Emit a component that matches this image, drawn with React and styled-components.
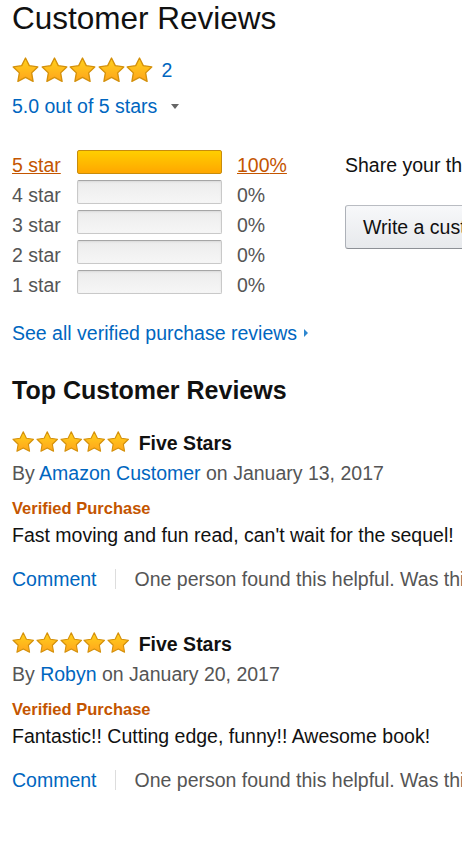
import React from 'react';
import styled, { createGlobalStyle, css } from 'styled-components';

const GlobalStyle = createGlobalStyle`
  html, body {
    margin: 0;
    padding: 0;
    background: #fff;
    overflow-x: hidden;
  }
  body {
    font-family: "Liberation Sans", Arial, sans-serif;
    color: #111;
  }
`;

const Page = styled.div`
  padding: 0 0 40px 12px;
  width: 900px;
`;

const Title = styled.h2`
  margin: 0;
  font-size: 31.5px;
  line-height: 37px;
  font-weight: 400;
  color: #111;
`;

const StarRow = styled.div`
  display: flex;
  align-items: center;
  gap: ${props => props.gap}px;
  margin-top: ${props => props.top || 0}px;
`;

const CountLink = styled.a`
  margin-left: 7px;
  font-size: 19.5px;
  line-height: 24px;
  color: #0066c0;
  text-decoration: none;
`;

const RatingLine = styled.div`
  display: flex;
  align-items: center;
  margin-top: 12px;
  font-size: 19.5px;
  line-height: 24px;
  color: #0066c0;
`;

const Caret = styled.span`
  display: inline-block;
  margin-left: 14px;
  width: 0;
  height: 0;
  border-left: 4px solid transparent;
  border-right: 4px solid transparent;
  border-top: 5px solid #666;
`;

const Summary = styled.div`
  display: flex;
  margin-top: 32px;
`;

const Histogram = styled.div`
  width: 333px;
  flex-shrink: 0;
`;

const HistRow = styled.div`
  display: flex;
  align-items: flex-start;
  height: 24px;
  margin-bottom: 6px;
  font-size: 19.5px;
  line-height: 24px;
  color: ${props => (props.active ? '#c45500' : '#555')};
`;

const HistLabel = styled.span`
  width: 65px;
  padding-top: 3px;
  ${props => props.active && css`text-decoration: underline;`}
`;

const Meter = styled.div`
  width: 145px;
  height: 24px;
  box-sizing: border-box;
  border-radius: 2px;
  ${props =>
    props.filled
      ? css`
          background: linear-gradient(to bottom, #ffce00, #ffa700);
          border: 1px solid #c88c0c;
        `
      : css`
          background: linear-gradient(to bottom, #ececec, #f6f6f6);
          border: 1px solid #c9c9c9;
          border-top-color: #a6a6a6;
          box-shadow: inset 0 1px 2px rgba(0, 0, 0, 0.08);
        `}
`;

const Percent = styled.span`
  margin-left: 15px;
  padding-top: 3px;
  ${props => props.active && css`text-decoration: underline;`}
`;

const ShareCol = styled.div`
  padding-top: 3px;
  white-space: nowrap;
  font-size: 19.5px;
  line-height: 24px;
  color: #111;
`;

const WriteButton = styled.button`
  display: block;
  margin-top: 28px;
  height: 44px;
  padding: 0 17px;
  border: 1px solid #adb1b8;
  border-top-color: #b9bcc2;
  border-bottom-color: #8d9096;
  border-radius: 3px;
  background: linear-gradient(to bottom, #f7f8fa, #e7e9ec);
  font-family: "Liberation Sans", Arial, sans-serif;
  font-size: 19.5px;
  color: #111;
  white-space: nowrap;
`;

const SeeAll = styled.div`
  display: flex;
  align-items: center;
  margin-top: 21px;
  font-size: 19.5px;
  line-height: 24px;
  color: #0066c0;
`;

const RightCaret = styled.span`
  display: inline-block;
  margin-left: 7px;
  width: 0;
  height: 0;
  border-top: 4px solid transparent;
  border-bottom: 4px solid transparent;
  border-left: 4px solid #2f87cf;
`;

const SectionHeading = styled.h3`
  margin: 30px 0 0;
  font-size: 25px;
  line-height: 30px;
  font-weight: 700;
  color: #111;
`;

const Review = styled.div`
  margin-top: ${props => props.top}px;
`;

const ReviewHead = styled.div`
  display: flex;
  align-items: flex-start;
  height: 24px;
`;

const ReviewTitle = styled.span`
  margin: 0 0 0 9px;
  font-size: 19.5px;
  line-height: 24px;
  font-weight: 700;
  color: #111;
`;

const Byline = styled.div`
  margin-top: 6px;
  font-size: 19.5px;
  line-height: 24px;
  color: #555;
  white-space: nowrap;
`;

const Link = styled.a`
  color: #0066c0;
  text-decoration: none;
`;

const Verified = styled.div`
  margin-top: 13px;
  font-size: 16.5px;
  line-height: 20px;
  font-weight: 700;
  color: #c45500;
`;

const Body = styled.div`
  margin-top: 5px;
  font-size: 19.5px;
  line-height: 24px;
  color: #111;
  white-space: nowrap;
`;

const Actions = styled.div`
  display: flex;
  align-items: center;
  margin-top: 20px;
  font-size: 19.5px;
  line-height: 24px;
  white-space: nowrap;
  color: #555;
`;

const Divider = styled.span`
  width: 1px;
  height: 20px;
  margin: 0 19px 0 18px;
  background: #ddd;
`;

const Star = ({ size }) => (
  <svg width={size} height={size * 20.5 / 22} viewBox="1 1.2 22 20.5">
    <defs>
      <linearGradient id="starFill" x1="0" y1="0" x2="0" y2="1">
        <stop offset="0" stopColor="#ffd21c" />
        <stop offset="1" stopColor="#ffa41c" />
      </linearGradient>
    </defs>
    <polygon
      points="12,2 15.09,8.26 22,9.27 17,14.14 18.18,21.02 12,17.77 5.82,21.02 7,14.14 2,9.27 8.91,8.26"
      fill="url(#starFill)"
      stroke="#d4900a"
      strokeWidth="1.1"
      strokeLinejoin="round"
    />
  </svg>
);

const Stars = ({ size, gap, top }) => (
  <StarRow gap={gap} top={top}>
    {[0, 1, 2, 3, 4].map(i => <Star key={i} size={size} />)}
  </StarRow>
);

const histogram = [
  { label: '5 star', value: 100 },
  { label: '4 star', value: 0 },
  { label: '3 star', value: 0 },
  { label: '2 star', value: 0 },
  { label: '1 star', value: 0 },
];

const reviews = [
  { author: 'Amazon Customer', date: 'January 13, 2017', text: "Fast moving and fun read, can't wait for the sequel!" },
  { author: 'Robyn', date: 'January 20, 2017', text: 'Fantastic!! Cutting edge, funny!! Awesome book!' },
];

const App = () => (
  <Page>
    <GlobalStyle />
    <Title>Customer Reviews</Title>
    <StarRow gap={1.5} top={20}>
      {[0, 1, 2, 3, 4].map(i => <Star key={i} size={27} />)}
      <CountLink>2</CountLink>
    </StarRow>
    <RatingLine>
      5.0 out of 5 stars
      <Caret />
    </RatingLine>

    <Summary>
      <Histogram>
        {histogram.map(row => {
          const active = row.value > 0;
          return (
            <HistRow key={row.label} active={active}>
              <HistLabel active={active}>{row.label}</HistLabel>
              <Meter filled={active} />
              <Percent active={active}>{row.value}%</Percent>
            </HistRow>
          );
        })}
      </Histogram>
      <ShareCol>
        Share your thoughts with other customers
        <WriteButton>Write a customer review</WriteButton>
      </ShareCol>
    </Summary>

    <SeeAll>
      See all verified purchase reviews
      <RightCaret />
    </SeeAll>

    <SectionHeading>Top Customer Reviews</SectionHeading>

    {reviews.map((r, i) => (
      <Review key={r.author} top={i === 0 ? 26 : 41}>
        <ReviewHead>
          <Stars size={22.5} gap={1.3} />
          <ReviewTitle>Five Stars</ReviewTitle>
        </ReviewHead>
        <Byline>
          By <Link>{r.author}</Link> on {r.date}
        </Byline>
        <Verified>Verified Purchase</Verified>
        <Body>{r.text}</Body>
        <Actions>
          <Link>Comment</Link>
          <Divider />
          One person found this helpful. Was this review helpful to you?
        </Actions>
      </Review>
    ))}
  </Page>
);

export default App;
